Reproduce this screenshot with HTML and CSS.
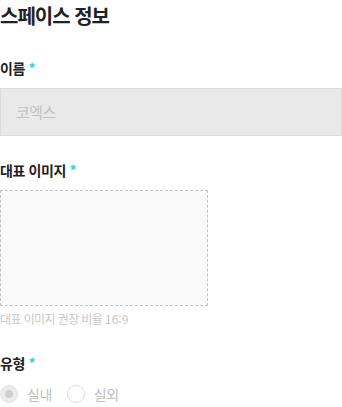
FILE: index.html
```html
<!DOCTYPE html>
<html lang="ko">
<head>
<meta charset="utf-8">
<link rel="stylesheet" href="styles.css">
</head>
<body>
<div class="page">
  <h2 class="title">스페이스 정보</h2>

  <div class="field field-name">
    <div class="label">이름 <span class="req">*</span></div>
    <div class="input">코엑스</div>
  </div>

  <div class="field field-image">
    <div class="label">대표 이미지 <span class="req">*</span></div>
    <div class="dropbox"></div>
    <div class="hint">대표 이미지 권장 비율 <span class="num">16:9</span></div>
  </div>

  <div class="field field-type">
    <div class="label">유형 <span class="req">*</span></div>
    <div class="radios">
      <label class="radio"><span class="dot checked"></span><span class="rtext">실내</span></label>
      <label class="radio"><span class="dot"></span><span class="rtext">실외</span></label>
    </div>
  </div>
</div>
</body>
</html>
```

FILE: styles.css
```css
html, body {
  margin: 0;
  padding: 0;
  background: #fff;
}
body {
  font-family: "Noto Sans CJK KR", "Noto Sans", sans-serif;
  color: #222;
}
.page {
  width: 342px;
}
.title {
  margin: 0;
  height: 32px;
  line-height: 32px;
  font-size: 20px;
  font-weight: 700;
  color: #222;
  letter-spacing: -1px;
}
.label {
  height: 20px;
  line-height: 20px;
  font-size: 14px;
  font-weight: 700;
  color: #222;
  letter-spacing: -0.4px;
}
.req {
  color: #2fd2e6;
  font-weight: 700;
}
.field-name {
  margin-top: 26px;
}
.input {
  margin-top: 10px;
  box-sizing: border-box;
  height: 48px;
  width: 342px;
  border: 1px solid #dcdcdc;
  background: #e9e9e9;
  padding: 0 15px;
  line-height: 46px;
  font-size: 15px;
  color: #c2c2c2;
  letter-spacing: -0.5px;
}
.field-image {
  margin-top: 24px;
}
.dropbox {
  margin-top: 10px;
  box-sizing: border-box;
  width: 208px;
  height: 116px;
  border: 1px dashed #c4c4c4;
  background: #fafafa;
}
.hint {
  margin-top: 4px;
  height: 18px;
  line-height: 18px;
  font-size: 12px;
  color: #c8c8c8;
  letter-spacing: -0.6px;
}
.hint .num {
  letter-spacing: 0;
}
.field-type {
  margin-top: 25px;
}
.radios {
  margin-top: 11px;
  display: flex;
  align-items: center;
  gap: 15px;
  height: 20px;
}
.radio {
  display: flex;
  align-items: center;
  gap: 9px;
}
.dot {
  box-sizing: border-box;
  width: 18px;
  height: 18px;
  border-radius: 50%;
  border: 1px solid #dcdcdc;
  background: #fff;
  display: flex;
  align-items: center;
  justify-content: center;
}
.dot.checked {
  background: #ececec;
  border-color: #e4e4e4;
}
.dot.checked::after {
  content: "";
  width: 8px;
  height: 8px;
  border-radius: 50%;
  background: #cfcfcf;
}
.rtext {
  font-size: 14px;
  line-height: 20px;
  color: #c0c0c0;
  letter-spacing: -0.5px;
}
```
